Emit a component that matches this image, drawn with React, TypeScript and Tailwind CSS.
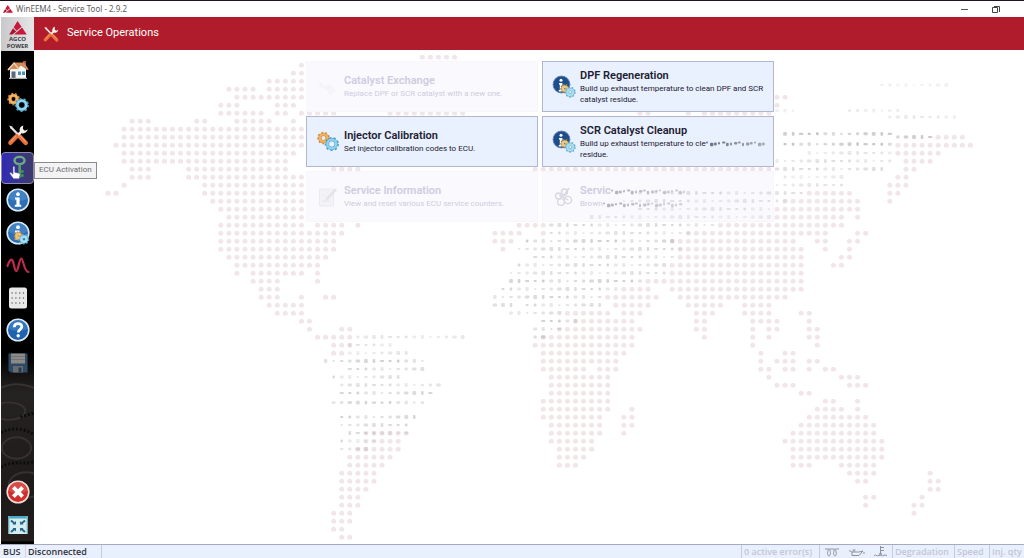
import type { ReactNode } from 'react';

const COLUMN_PITCH = 8.06;
const ROW_PITCH = 8;
const MAP_LEFT = 74;
const MAP_TOP = 15;

// Each entry is a map row followed by the column ranges that hold land.
const LAND: [number, string][] = [
  [-1, '39-43'],
  [0, '24'],
  [1, '23-24'],
  [2, '20-24'],
  [3, '15-18 20-24'],
  [4, '16-24 83-84'],
  [5, '14-16 21-23 83'],
  [6, '14-19 21-22 24-28 35-44 66-67 72 74-82'],
  [7, '3-5 11-12 16-20 23'],
  [8, '2-24'],
  [9, '2-24 103-106'],
  [10, '1-24 98-107'],
  [11, '2-23 98-103'],
  [12, '2-22 99-102'],
  [13, '3-5 10-22 28-31 53-82 99-100'],
  [14, '3-5 10-24 98-99'],
  [15, '2 12-24 97-99'],
  [16, '0-1 12-24 87-92 97-98'],
  [17, '13-24 84-93 97'],
  [18, '14-24 83-93'],
  [19, '15-24 83-91 93'],
  [20, '14-24 26-29 31 51-54 76-91'],
  [21, '14-29 48-51 54 72-89 93-94'],
  [22, '14-28 48-50 70-85 88-89 92-93'],
  [23, '14-28 49 71-86 89 92'],
  [24, '15-27 71-86 91-92'],
  [25, '16-26 70-86 90-91'],
  [26, '16 18-24 26 70-86'],
  [27, '18-21 26 67-86'],
  [28, '19-21 64-67 70-86'],
  [29, '19-21 24 27-28 62-68 71-84'],
  [30, '20-24 63-67 72-76 79-82'],
  [31, '21-24 57-62 64-66 73-75 79-82 86-87'],
  [32, '24-25 58-65 73-74 80-83 87'],
  [33, '25 29-30 56-66 73-74 80 82-83 87-88'],
  [34, '26-30 54-65 74 80 82 87-88'],
  [35, '28-30 53-65 80 88'],
  [36, '28-29 54-64 81 84-85'],
  [37, '54-63 81 83-85 87-88'],
  [38, '54-59 61-63 81-82 84-85 87 89-90'],
  [39, '55-62 82 91-93'],
  [40, '55-62 83-85 92-94'],
  [41, '55-62 86-87'],
  [42, '54-62 89-90 93'],
  [43, '54-62 65 88-91 93'],
  [44, '54-61 64-65 87-94'],
  [45, '55-61 64-65 86-95'],
  [46, '32-37 55-61 64 85-95'],
  [47, '32-36 55-60 84-96'],
  [48, '31-36 56-60 85-96'],
  [49, '30-35 56-59 85-96'],
  [50, '30-34 56-58 85-87 91-95'],
  [51, '29-33 92-95 102'],
  [52, '29-33 93-94 102-103'],
  [53, '29-32 102-103'],
  [54, '29-31 94-95 101'],
  [55, '29-31 94 100-101'],
  [56, '28-30 100'],
  [57, '28-30'],
  [58, '28-29'],
  [59, '29-30'],
];

// Broken-up dots: row, ranges, opacity.
const FADED: [number, string, number][] = [
  [2.5, '96-104', 0.18],
  [5.7, '83-85 92-98', 0.25],
  [6.5, '97-105', 0.25],
  [8.6, '84-97', 0.6],
  [9, '98-102', 0.6],
  [9.9, '84-97', 0.6],
  [11, '87-97', 0.3],
  [12, '83-97', 0.35],
  [13, '83-96', 0.4],
  [14, '84-91', 0.25],
  [15, '83-91', 0.3],
  [16, '65-86', 0.35],
  [17, '64-84', 0.3],
  [18, '66-82', 0.3],
  [19, '60-82', 0.25],
  [20, '55-75', 0.4],
  [21, '55-72', 0.35],
  [22, '52-70', 0.5],
  [23, '51-71', 0.4],
  [24, '53-70', 0.4],
  [25, '51-69', 0.4],
  [26, '50-69', 0.35],
  [27, '50-66', 0.5],
  [28, '49-63', 0.4],
  [29, '48-61', 0.45],
  [30, '48-50 52-61', 0.4],
  [31, '50-56', 0.4],
  [32, '54-58', 0.5],
  [33, '53-56', 0.5],
  [34, '53-54', 0.5],
  [34, '31-44', 0.3],
  [35, '30-35', 0.3],
  [36, '30-37', 0.3],
  [37, '27-39', 0.5],
  [38, '30-39', 0.4],
  [39, '28-36', 0.35],
  [40, '29-41', 0.35],
  [41, '29-40', 0.45],
  [42.2, '28-39', 0.45],
  [44, '29-38', 0.45],
  [45, '29-37', 0.4],
  [46, '30-37', 0.4],
  [47, '29-33', 0.35],
  [48, '29-32', 0.35],
];

function columnsOf(ranges: string): number[] {
  return ranges.split(' ').flatMap((range) => {
    const [from, to = from] = range.split('-').map(Number);
    return Array.from({ length: to - from + 1 }, (_, i) => from + i);
  });
}

function WorldMap() {
  return (
    <svg className="absolute inset-0 size-full" aria-hidden="true">
      {LAND.map(([row, ranges]) =>
        columnsOf(ranges).map((column) => (
          <rect
            key={`${row}:${column}`}
            x={MAP_LEFT + column * COLUMN_PITCH - 2.4}
            y={MAP_TOP + row * ROW_PITCH - 2.1}
            width="4.8"
            height="4.6"
            rx="1.6"
            fill="#f1e5e7"
          />
        )),
      )}
    </svg>
  );
}

function FadedDots() {
  return (
    <svg
      className="pointer-events-none absolute inset-0 size-full"
      aria-hidden="true"
    >
      {FADED.map(([row, ranges, opacity]) =>
        columnsOf(ranges).map((column) => {
          const seed = (Math.round(row * 10) * 31 + column * 17) % 11;
          const width = 2.6 + (seed % 4) * 0.6;
          const height = 2.2 + (seed % 3) * 0.8;
          return (
            <rect
              key={`${row}:${column}`}
              x={MAP_LEFT + column * COLUMN_PITCH - width / 2}
              y={MAP_TOP + row * ROW_PITCH - height / 2}
              width={width}
              height={height}
              rx="1"
              fill="#b0aab0"
              opacity={opacity * (0.7 + (seed % 5) * 0.12)}
            />
          );
        }),
      )}
    </svg>
  );
}

function Smear({ width, dark }: { width: number; dark?: boolean }) {
  return (
    <svg
      className="inline-block align-middle"
      width={width}
      height="8"
      aria-hidden="true"
      fill={dark ? '#4d5166' : '#a09eac'}
    >
      {Array.from({ length: Math.floor(width / 4) }, (_, i) => (
        <rect
          key={i}
          x={i * 4}
          y={2.6 + ((i * 3) % 4) * 0.4}
          width={2 + ((i * 5) % 3) * 0.7}
          height={2 + ((i * 3) % 4) * 0.5}
          rx="1"
          opacity={0.8 - (i / (width / 4)) * 0.4}
        />
      ))}
    </svg>
  );
}

function AgcoMark({ className }: { className: string }) {
  return (
    <svg className={className} viewBox="0 0 20 16" aria-hidden="true">
      <path d="M9.5 0 14 6.5 8.5 11 5 7.2z" fill="#c8193a" />
      <path d="M4.3 8.2 8 12 3.5 15.5H0z" fill="#a3122e" />
      <path d="M14.6 7.4 20 15.5H5.5z" fill="#c8193a" />
    </svg>
  );
}

function Icon({ children, size = 24 }: { children: ReactNode; size?: number }) {
  return (
    <svg width={size} height={size} viewBox="0 0 24 24" fill="none" aria-hidden="true">
      {children}
    </svg>
  );
}

interface GearProps {
  cx: number;
  cy: number;
  r: number;
  color: string;
  edge: string;
}

function Gear({ cx, cy, r, color, edge }: GearProps) {
  const tooth = (2 * Math.PI * (r + 1)) / 18;
  return (
    <g>
      <circle
        cx={cx}
        cy={cy}
        r={r + 1}
        stroke={edge}
        strokeWidth="2.2"
        strokeDasharray={`${tooth} ${tooth}`}
      />
      <circle cx={cx} cy={cy} r={r - 0.6} stroke={edge} strokeWidth="3.4" />
      <circle cx={cx} cy={cy} r={r - 0.6} stroke={color} strokeWidth="2.4" />
    </g>
  );
}

function GearsIcon({ size }: { size?: number }) {
  return (
    <Icon size={size}>
      <Gear cx={7.5} cy={8} r={4.2} color="#f2b260" edge="#c98a44" />
      <Gear cx={15.8} cy={14} r={5} color="#8fd3ee" edge="#4c9fc6" />
    </Icon>
  );
}

function ToolsIcon({ size }: { size?: number }) {
  return (
    <Icon size={size}>
      <path d="M5 4.2 12.5 12" stroke="#e9e6e2" strokeWidth="2.2" />
      <path d="m3.2 2.6 3.4 1.2-1.8 2z" fill="#f5f3ef" />
      <path d="m13.2 13 6.6 7" stroke="#e8703a" strokeWidth="4.4" strokeLinecap="round" />
      <path d="m14 12.8 5.6 6" stroke="#f8a878" strokeWidth="1" />
      <path d="m16.8 7.2-6 6" stroke="#f3f0ec" strokeWidth="2.6" />
      <path
        d="M17.2 2.4a4.6 4.6 0 0 0-3.4 5.8l2 2a4.7 4.7 0 0 0 5.9-3.8l-2.8 1.4-2-1.8z"
        fill="#f3f0ec"
      />
      <path d="m10.6 13.2-6.2 6.6" stroke="#e8703a" strokeWidth="4.4" strokeLinecap="round" />
      <path d="m10 12.8-5.4 6" stroke="#f8a878" strokeWidth="1" />
    </Icon>
  );
}

function HomeIcon() {
  return (
    <Icon>
      <path d="M17 3h3v6h-3z" fill="#a65a3a" />
      <path d="M4 10 12 5l8 5v10H4z" fill="#f4f4f0" />
      <path d="M1.5 11.5 8 4.5h10l4.8 7-1.8.6L15 7.5 11.5 11h-6l-2.6 1.5z" fill="#d08a5c" />
      <path d="M2 12 8 5l5 6.4" stroke="#f0d0ae" strokeWidth="1.4" />
      <path d="M5.5 13.5h4V20h-4z" fill="#5a6a7a" />
      <path d="M12 13.5h3v3.5h-3zM16 13.5h3v3.5h-3z" fill="#4d8fb6" />
      <path d="M3 20.3h18" stroke="#cfd3d3" />
    </Icon>
  );
}

function KeyIcon() {
  return (
    <svg width="28" height="28" viewBox="0 0 28 28" fill="none" aria-hidden="true">
      <ellipse cx="15.5" cy="6.5" rx="5" ry="3.6" stroke="#6fae7c" strokeWidth="2.4" />
      <path d="M15.7 10v13.5" stroke="#5a9c68" strokeWidth="2.6" />
      <path d="M16 17.5h3.6M16 21.5h3.6" stroke="#3f9a4c" strokeWidth="2.4" />
      <path
        d="M9 13.2c0-1.2 1.8-1.2 1.8 0v5l4.2 1c1 .3 1.2 1 1 2l-.8 3.6H9.5l-3.6-5c-.6-1 .6-1.8 1.4-1l1.700 1.400z"
        fill="#fff"
        stroke="#5753a8"
        strokeWidth=".6"
      />
    </svg>
  );
}

function InfoDisc() {
  return (
    <>
      <circle cx="12" cy="12" r="10.8" fill="#2c6fb5" stroke="#dbe9f4" strokeWidth="1.6" />
      <path d="M3 11a9 9 0 0 1 18 0c-5 2.5-13 2.5-18 0z" fill="#4f90cd" opacity=".6" />
      <circle cx="12" cy="6.2" r="1.9" fill="#fff" />
      <path d="M9 9.4h4.6v7.4h1.6v2H8.8v-2h1.6v-5.4H9z" fill="#fff" />
    </>
  );
}

function InfoIcon() {
  return (
    <Icon>
      <InfoDisc />
    </Icon>
  );
}

function InfoGearsIcon({ size }: { size?: number }) {
  return (
    <Icon size={size}>
      <InfoDisc />
      <Gear cx={12.4} cy={15} r={2.6} color="#f2c274" edge="#c08c48" />
      <Gear cx={18} cy={18.2} r={3.2} color="#a5def2" edge="#5aaed2" />
    </Icon>
  );
}

function TileInfoIcon() {
  return (
    <Icon>
      <circle cx="9.5" cy="9.5" r="8.4" fill="#1d4d8c" stroke="#5b7fae" />
      <circle cx="9" cy="5.2" r="1.5" fill="#fff" />
      <path d="M7 8h3.4v7h1v1.6H6.8V15h1V9.6H7z" fill="#fff" />
      <Gear cx={12.8} cy={13.6} r={2.6} color="#ecca86" edge="#a08450" />
      <Gear cx={18.2} cy={17.2} r={3.4} color="#a9dcee" edge="#5fabc9" />
    </Icon>
  );
}

function WaveIcon() {
  return (
    <Icon>
      <path
        d="M1.500 13C3.500 7 5.500 4.500 7 8.500c1.600 4.500 1.600 9.500 3.400 9.500s3-12.500 4.800-12.500c2.200 0 2.800 13.500 7.300 13.500"
        stroke="#c22a4c"
        strokeWidth="2.2"
        strokeLinecap="round"
      />
    </Icon>
  );
}

function KeypadIcon() {
  return (
    <Icon>
      <rect x="3" y="1.5" width="18" height="21" rx="2.5" fill="#e9e9e9" />
      {[7, 12, 17].map((y) => (
        <path
          key={y}
          d={`M5.5 ${y}h13`}
          stroke="#8b8f94"
          strokeWidth="2"
          strokeDasharray="1.2 2.6"
        />
      ))}
    </Icon>
  );
}

function HelpIcon() {
  return (
    <Icon>
      <circle cx="12" cy="12" r="10.8" fill="#1f62ad" stroke="#dbe9f4" strokeWidth="1.6" />
      <path d="M3 11a9 9 0 0 1 18 0c-5 2.5-13 2.5-18 0z" fill="#4888cc" opacity=".6" />
      <path
        d="M8.2 9.2c0-5 7.8-4.6 7.6-.4-.1 2.6-3.5 2.8-3.5 5.6"
        stroke="#fff"
        strokeWidth="2.8"
      />
      <circle cx="12.2" cy="17.8" r="1.7" fill="#fff" />
    </Icon>
  );
}

function SaveIcon() {
  return (
    <Icon>
      <path d="M2.5 2.5h19v19h-17l-2-2z" fill="#2f4a66" />
      <path d="M5 2.5h14v10H5z" fill="#8c8a88" />
      <path d="M5 5.5h14M5 8.5h14" stroke="#737372" />
      <path d="M7 15h10v6.5H7z" fill="#686c6e" />
      <path d="M12.5 16.5h3v5h-3z" fill="#283a4b" />
    </Icon>
  );
}

function CloseIcon() {
  return (
    <Icon>
      <circle cx="12" cy="12" r="10.8" fill="#cf2f2b" stroke="#f0dcd9" strokeWidth="1.6" />
      <path d="M3 11a9 9 0 0 1 18 0c-5 2.5-13 2.5-18 0z" fill="#e2695f" opacity=".5" />
      <path d="m7.4 7.4 9.2 9.2m0-9.2-9.2 9.2" stroke="#fff" strokeWidth="3.8" />
    </Icon>
  );
}

function ShrinkIcon() {
  return (
    <Icon>
      <path d="M2.5 3h19v18h-19z" fill="#d3edf3" />
      <path d="M2.5 3h19v2.5h-19z" fill="#49a8c6" />
      <path d="M3 3v18M21 3v18" stroke="#7cc4d8" />
      <path
        d="m5 7.500 3.500 3m10.500-3-3.500 3M5 19l3.500-3m10.500 3-3.500-3"
        stroke="#2a6482"
        strokeWidth="2"
      />
      <path
        d="M6.500 11.500h3.500V8zM17.500 11.500H14V8zM6.500 15h3.500v3.500zM17.500 15H14v3.500z"
        fill="#2a6482"
      />
    </Icon>
  );
}

function FaintCatalystIcon() {
  return (
    <Icon>
      <path d="m3 5 6 6 5-2 6 7-6 4-4-6-6-2z" fill="#f5f4f9" />
    </Icon>
  );
}

function FaintNoteIcon() {
  return (
    <Icon>
      <path d="M3.5 4h14v17h-14z" fill="#f3f2f7" stroke="#eceaf1" />
      <path d="m10 13 9-9.5 2 1.6-8.6 9.4-3 1z" fill="#e4e2ea" />
      <path d="m6 9 3 3m-3 4h8" stroke="#e8e6ee" />
    </Icon>
  );
}

function FaintServiceIcon() {
  return (
    <Icon>
      <g stroke="#d9d8e0" strokeWidth="1.4">
        <circle cx="6.5" cy="11" r="3" />
        <circle cx="12.5" cy="7" r="3" />
        <circle cx="9" cy="17" r="3.4" />
        <circle cx="16" cy="15" r="3.6" />
        <path d="m11 12 6-9M7 10l9 5" />
      </g>
    </Icon>
  );
}

interface OperationProps {
  icon: ReactNode;
  title: ReactNode;
  disabled?: boolean;
  children: ReactNode;
}

function Operation({ icon, title, disabled, children }: OperationProps) {
  return (
    <button
      type="button"
      disabled={disabled}
      className="flex h-[51px] items-center gap-1 border border-[#b1b6d2] bg-[#e9f0fe] pl-[9px] text-left font-['Roboto','Noto_Sans',sans-serif] text-[#1c2030] disabled:border-[#f8f6fc] disabled:bg-[#faf9fe] disabled:text-[#cfcce0]"
    >
      <span className="w-6 shrink-0">{icon}</span>
      <span className="min-w-0 flex-1">
        <span className="block text-[11px] leading-[14px] font-semibold">{title}</span>
        <span className="block text-[8px] leading-[11px] whitespace-nowrap">{children}</span>
      </span>
    </button>
  );
}

const NAVIGATION_ITEMS = [
  { label: 'Home', icon: <HomeIcon /> },
  { label: 'Settings', icon: <GearsIcon /> },
  { label: 'Service Operations', icon: <ToolsIcon /> },
  { label: 'ECU Activation', icon: <KeyIcon />, active: true },
  { label: 'ECU Information', icon: <InfoIcon /> },
  { label: 'Engine Information', icon: <InfoGearsIcon /> },
  { label: 'Measurements', icon: <WaveIcon /> },
  { label: 'Parameters', icon: <KeypadIcon /> },
  { label: 'Help', icon: <HelpIcon /> },
  { label: 'Save', icon: <SaveIcon /> },
];

function SidebarTexture() {
  return (
    <svg
      className="absolute inset-x-0 bottom-0 h-48 w-full"
      viewBox="0 0 34 192"
      fill="none"
      aria-hidden="true"
    >
      <defs>
        <linearGradient id="steel" x1="0" y1="0" x2="0" y2="1">
          <stop offset="0" stopColor="#000" />
          <stop offset=".2" stopColor="#252322" />
          <stop offset=".75" stopColor="#1d1a19" />
          <stop offset="1" stopColor="#241d1b" />
        </linearGradient>
      </defs>
      <path d="M0 0h34v192H0z" fill="url(#steel)" />
      <g stroke="#353231" strokeWidth="2">
        <path d="M0 34c12-6 24-4 34 0" />
        <ellipse cx="8" cy="58" rx="17" ry="9" />
        <ellipse cx="16" cy="96" rx="15" ry="11" />
        <ellipse cx="26" cy="134" rx="18" ry="13" />
      </g>
      <g stroke="#0c0c0c" strokeWidth="3" strokeDasharray="2 2">
        <path d="M0 80c12-6 24-4 34 2M0 116c12-8 22-2 34-6M20 64l14-4" />
      </g>
    </svg>
  );
}

function Sidebar() {
  return (
    <aside className="relative ml-px flex w-[33px] shrink-0 flex-col bg-black">
      <SidebarTexture />
      <div className="flex h-[34px] flex-col items-center justify-end bg-gradient-to-r from-[#c9c9cb] to-[#e6e6e8] pb-px text-[6px] leading-[7px] font-bold text-[#3c3c42]">
        <AgcoMark className="mb-px h-[14px] w-[18px]" />
        <span>AGCO</span>
        <span>POWER</span>
      </div>
      <nav className="relative mt-[3px] flex h-[325px] flex-col justify-between">
        {NAVIGATION_ITEMS.map((item) => (
          <div className="relative" key={item.label}>
            <button
              type="button"
              aria-label={item.label}
              className={
                item.active
                  ? 'grid h-8 w-full place-items-center rounded-sm border border-[#8e8ba8] bg-gradient-to-r from-[#3327b8] to-[#3d3a68]'
                  : 'grid h-8 w-full place-items-center'
              }
            >
              {item.icon}
            </button>
            {item.active ? (
              <div
                role="tooltip"
                className="absolute top-[10px] left-[33px] z-10 flex h-[17px] items-center border border-[#8a8a8a] bg-[#f3f3f5] px-1 font-['Roboto','Noto_Sans',sans-serif] text-[8px] whitespace-nowrap text-[#6c6c6c]"
              >
                ECU Activation
              </div>
            ) : null}
          </div>
        ))}
      </nav>
      <div className="relative mt-auto flex flex-col gap-px pb-[3px]">
        <button type="button" aria-label="Close" className="grid h-8 place-items-center">
          <CloseIcon />
        </button>
        <button type="button" aria-label="Restore" className="grid h-8 place-items-center">
          <ShrinkIcon />
        </button>
      </div>
    </aside>
  );
}

function StatusBar() {
  return (
    <footer className="flex h-[14px] shrink-0 items-stretch border-t border-[#a9a9c4] bg-[#e9f0fd] text-[9px] leading-[13px] font-semibold whitespace-nowrap text-[#30303a]">
      <span className="w-[26px] border-r border-[#d4d4e6] pl-[3px]">BUS</span>
      <span className="w-[76px] border-r border-[#c6cade] pl-0.5">Disconnected</span>
      <div className="ml-auto flex text-[#c3c5d9]">
        <span className="w-[78px] border-l border-[#c6cade] pl-0.5">0 active error(s)</span>
        <div className="flex w-[73px] items-center justify-around border-l border-[#c6cade] text-[#8f91a0]">
          <svg width="16" height="12" viewBox="0 0 16 12" fill="none" stroke="currentColor" aria-hidden="true">
            <path d="M1 3h3c3 0 3 7 1 7s-2-7 1-7h3c4 0 4 7 2 7s-2-7 1-7h3" />
          </svg>
          <svg width="17" height="12" viewBox="0 0 17 12" fill="none" stroke="currentColor" aria-hidden="true">
            <path d="M1 4.5 4 6v3.5h7L15 5l-4 1H4M6 6V4m-1.5 0h3M16 6v2" />
          </svg>
          <svg width="15" height="12" viewBox="0 0 15 12" fill="none" stroke="currentColor" aria-hidden="true">
            <path d="M7.5 0v8M8 1.5h3M8 4.5h3M1 9.5c2-1 3 1 5 0s3 1 4 0 3 0 4 0" />
            <circle cx="7.5" cy="8" r="1" />
          </svg>
        </div>
        <span className="w-[62px] border-l border-[#c6cade] pl-0.5">Degradation</span>
        <span className="w-[35px] border-l border-[#c6cade] pl-0.5">Speed</span>
        <span className="w-[35px] border-l border-[#c6cade] pl-0.5">Inj. qty</span>
      </div>
    </footer>
  );
}

export default function App() {
  return (
    <div className="flex h-screen flex-col overflow-hidden bg-white font-['Open_Sans','Noto_Sans',sans-serif]">
      <div className="flex h-[17px] shrink-0 items-center border-t border-[#1d1420] pl-[3px] text-[#5c5c5c]">
        <AgcoMark className="h-2 w-[10px]" />
        <span className="pl-[3px] font-['Noto_Sans','Open_Sans',sans-serif] text-[8px]">
          WinEEM4 - Service Tool - 2.9.2
        </span>
        <div className="ml-auto flex items-center gap-5 pr-[21px]">
          <button type="button" aria-label="Minimize">
            <svg width="12" height="10" viewBox="0 0 12 10" aria-hidden="true">
              <path d="M2 5.5h7" stroke="#555" />
            </svg>
          </button>
          <button type="button" aria-label="Restore window">
            <svg width="12" height="10" viewBox="0 0 12 10" fill="none" stroke="#444" aria-hidden="true">
              <path d="M1.5 3.5h5v5h-5zM3 2.5h5.5V8" />
            </svg>
          </button>
        </div>
      </div>

      <div className="flex min-h-0 flex-1">
        <Sidebar />
        <div className="flex min-w-0 flex-1 flex-col">
          <header className="flex h-[33px] shrink-0 items-center bg-[#b01c2b] pl-2 text-white">
            <ToolsIcon size={18} />
            <h1 className="pl-[7px] font-['Roboto','Noto_Sans',sans-serif] text-[11px]">
              Service Operations
            </h1>
          </header>
          <main className="relative flex-1 overflow-hidden pt-[11px] pl-[22px]">
            <WorldMap />
            <div className="relative mx-auto grid w-[468px] grid-cols-2 gap-1">
              <Operation disabled icon={<FaintCatalystIcon />} title="Catalyst Exchange">
                Replace DPF or SCR catalyst with a new one.
              </Operation>
              <Operation icon={<TileInfoIcon />} title="DPF Regeneration">
                Build up exhaust temperature to clean DPF and SCR
                <br />
                catalyst residue.
              </Operation>
              <Operation icon={<GearsIcon />} title="Injector Calibration">
                Set injector calibration codes to ECU.
              </Operation>
              <Operation icon={<TileInfoIcon />} title="SCR Catalyst Cleanup">
                Build up exhaust temperature to cle
                <Smear width={60} dark />
                <br />
                residue.
              </Operation>
              <Operation disabled icon={<FaintNoteIcon />} title="Service Information">
                View and reset various ECU service counters.
              </Operation>
              <Operation
                disabled
                icon={<FaintServiceIcon />}
                title={
                  <>
                    Servic
                    <Smear width={76} />
                  </>
                }
              >
                Brown
                <Smear width={80} />
              </Operation>
            </div>
            <FadedDots />
          </main>
        </div>
      </div>
      <StatusBar />
    </div>
  );
}
